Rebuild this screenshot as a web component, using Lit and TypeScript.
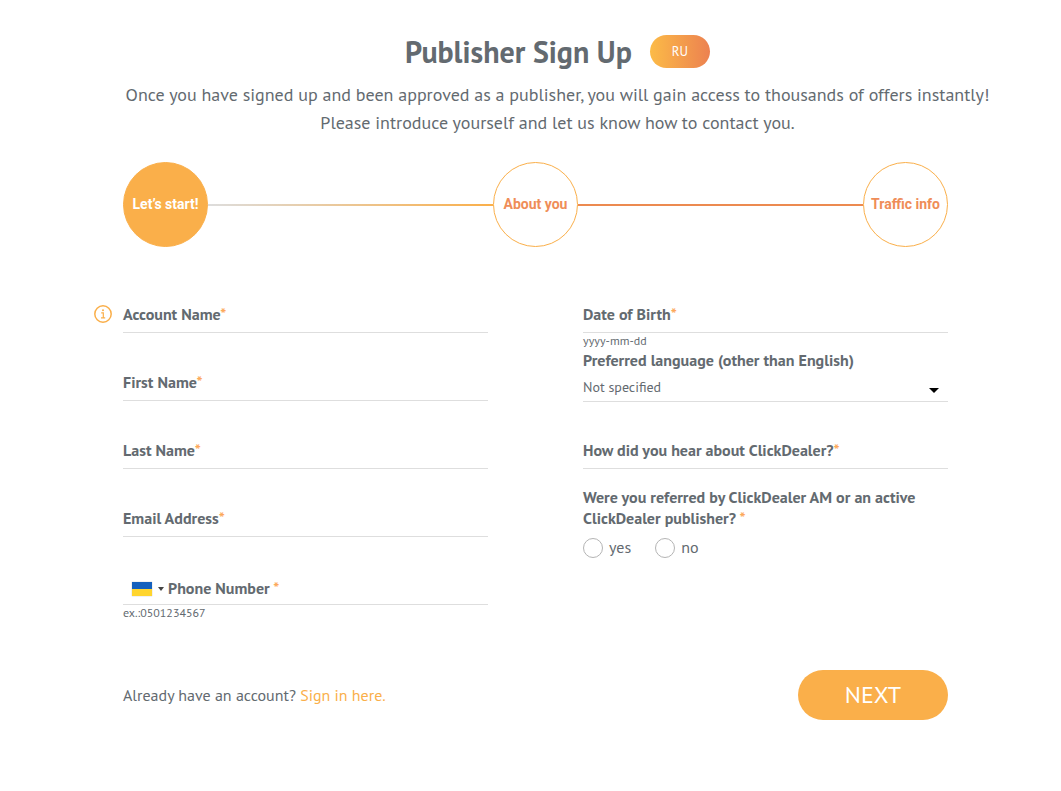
import { LitElement, html, css, svg } from "lit";
import { customElement, state } from "lit/decorators.js";

const infoIcon = svg`
  <circle cx="9" cy="9" r="8.2" fill="none" stroke="#faaf4a" stroke-width="1.5" />
  <circle cx="9" cy="5.2" r="1" fill="#faaf4a" />
  <path d="M7.2 7.9H9.3V12.6M7 12.8H11.2" fill="none" stroke="#faaf4a" stroke-width="1.2" />
`;

@customElement("app-root")
export class AppRoot extends LitElement {
  @state() private referred = "";

  static styles = css`
    :host {
      display: block;
      box-sizing: border-box;
      min-height: 100vh;
      padding: 35px 113px 71px 123px;
      background: #fff;
      color: #636a70;
      font-family: "PT Sans", Lato, "Noto Sans", sans-serif;
      font-size: 16px;
      line-height: 21px;
    }
    * {
      box-sizing: border-box;
    }
    button,
    input,
    select {
      font-family: inherit;
      color: inherit;
      margin: 0;
    }
    .header {
      margin: 0 -60px 0 -16px;
      text-align: center;
    }
    .title-row {
      display: flex;
      justify-content: center;
      align-items: center;
      gap: 18px;
    }
    .title {
      margin: 0;
      font-size: 30px;
      line-height: 33px;
      font-weight: 700;
    }
    .lang {
      width: 60px;
      height: 33px;
      padding: 0;
      border: 0;
      border-radius: 17px;
      background: linear-gradient(90deg, #fcbb47, #ec8150);
      color: #fff;
      font-size: 13px;
    }
    .intro {
      margin: 13px 0 0;
      font-size: 18px;
      line-height: 28px;
    }
    .steps {
      display: flex;
      align-items: center;
      margin: 25px 0 0;
      padding: 0;
      list-style: none;
    }
    .step {
      display: flex;
      flex: none;
      align-items: center;
      justify-content: center;
      width: 85px;
      height: 85px;
      border: 1px solid #faaf4a;
      border-radius: 50%;
      color: #ef8d58;
      font-family: Roboto, sans-serif;
      font-size: 14px;
      font-weight: 700;
      white-space: nowrap;
    }
    .step.active {
      background: #faaf4a;
      color: #fff;
    }
    .line {
      flex: 1;
      height: 2px;
      background: #ec8a50;
    }
    .line.started {
      background: linear-gradient(90deg, #dddddd, #faaf4a);
    }
    .columns {
      display: grid;
      grid-template-columns: 1fr 1fr;
      column-gap: 95px;
      margin-top: 48px;
    }
    .column {
      display: flex;
      flex-direction: column;
    }
    .column.left {
      gap: 30px;
    }
    .field {
      position: relative;
      display: grid;
      align-items: center;
      height: 38px;
      padding-top: 2px;
      border-bottom: 1px solid #dedede;
    }
    .field > label,
    .field > input {
      grid-area: 1 / 1;
    }
    .label {
      font-weight: 700;
    }
    .field > label {
      pointer-events: none;
    }
    .star {
      color: #fca95c;
    }
    .input {
      width: 100%;
      height: 35px;
      padding: 0;
      border: 0;
      outline: 0;
      background: none;
      font-size: 16px;
    }
    .info {
      position: absolute;
      left: -29px;
      top: 10px;
      width: 18px;
      height: 18px;
    }
    .phone {
      grid-template-columns: auto 1fr;
      column-gap: 4px;
      padding: 6px 0 0 9px;
    }
    .field.phone > label,
    .field.phone > input {
      grid-area: 1 / 2;
    }
    .phone .input {
      height: 31px;
    }
    .country {
      display: flex;
      align-items: center;
      gap: 6px;
      padding: 0;
      border: 0;
      background: none;
    }
    .flag {
      width: 20px;
      height: 14px;
      background: linear-gradient(#1460bd 50%, #ffd52e 50%);
      box-shadow: 0 0 1px #aaa;
    }
    .caret {
      border: 3px solid transparent;
      border-top: 4px solid #444;
      border-bottom: 0;
    }
    .hint {
      font-size: 12px;
      line-height: 16px;
    }
    .select-label {
      margin-top: 1px;
    }
    .select-wrap {
      display: grid;
      align-items: center;
      margin: 2px 0 29px;
      border-bottom: 1px solid #dedede;
    }
    .select {
      grid-area: 1 / 1;
      height: 28px;
      padding: 0;
      border: 0;
      outline: 0;
      appearance: none;
      background: none;
      font-size: 14px;
    }
    .arrow {
      grid-area: 1 / 1;
      justify-self: end;
      margin: 7px 9px 0 0;
      border: 5px solid transparent;
      border-top-color: #000;
      border-bottom: 0;
      pointer-events: none;
    }
    .referral {
      margin: 18px 0 0;
      padding: 0;
      border: 0;
    }
    .legend {
      padding: 0;
      font-weight: 700;
    }
    .choices {
      display: flex;
      gap: 24px;
      padding-top: 8px;
    }
    .choice {
      display: flex;
      align-items: center;
      gap: 6px;
    }
    .radio {
      appearance: none;
      width: 20px;
      height: 20px;
      border: 1px solid #b4b4b4;
      border-radius: 50%;
      background: #fff;
    }
    .radio:checked {
      background: radial-gradient(#faaf4a 45%, #fff 50%);
    }
    .footer {
      display: flex;
      align-items: center;
      justify-content: space-between;
      margin-top: 49px;
    }
    .signin {
      color: #faaf4a;
      text-decoration: none;
    }
    .next {
      width: 150px;
      height: 50px;
      padding: 0 0 2px;
      border: 0;
      border-radius: 25px;
      background: #faaf4a;
      color: #fff;
      font-size: 24px;
    }
  `;

  private star() {
    return html`<span class="star">*</span>`;
  }

  private field(id: string, label: string, info = false) {
    return html`
      <div class="field">
        ${info
          ? html`<svg class="info" viewBox="0 0 18 18" aria-hidden="true">${infoIcon}</svg>`
          : ""}
        <input class="input" id=${id} type="text" />
        <label class="label" for=${id}>${label}${this.star()}</label>
      </div>
    `;
  }

  private choice(value: string) {
    return html`
      <label class="choice">
        <input
          class="radio"
          type="radio"
          name="referred"
          value=${value}
          .checked=${this.referred === value}
          @change=${() => (this.referred = value)}
        />
        <span>${value}</span>
      </label>
    `;
  }

  render() {
    return html`
      <header class="header">
        <div class="title-row">
          <h1 class="title">Publisher Sign Up</h1>
          <button class="lang" type="button">RU</button>
        </div>
        <p class="intro">
          Once you have signed up and been approved as a publisher, you will gain access to
          thousands of offers instantly!<br />Please introduce yourself and let us know how to
          contact you.
        </p>
      </header>
      <div class="steps">
        <div class="step active">Let’s start!</div>
        <div class="line started"></div>
        <div class="step">About you</div>
        <div class="line"></div>
        <div class="step">Traffic info</div>
      </div>
      <form @submit=${(e: Event) => e.preventDefault()}>
        <div class="columns">
          <div class="column left">
            ${this.field("account", "Account Name", true)}
            ${this.field("first", "First Name")}
            ${this.field("last", "Last Name")}
            ${this.field("email", "Email Address")}
            <div>
              <div class="field phone">
                <button class="country" type="button" aria-label="Country code">
                  <span class="flag"></span><span class="caret"></span>
                </button>
                <input class="input" id="phone" type="tel" />
                <label class="label" for="phone">Phone Number ${this.star()}</label>
              </div>
              <div class="hint">ex.:0501234567</div>
            </div>
          </div>
          <div class="column">
            ${this.field("birth", "Date of Birth")}
            <div class="hint">yyyy-mm-dd</div>
            <label class="label select-label" for="language"
              >Preferred language (other than English)</label
            >
            <div class="select-wrap">
              <select class="select" id="language">
                <option>Not specified</option>
              </select>
              <span class="arrow"></span>
            </div>
            ${this.field("source", "How did you hear about ClickDealer?")}
            <fieldset class="referral">
              <legend class="legend">
                Were you referred by ClickDealer AM or an active ClickDealer publisher?
                ${this.star()}
              </legend>
              <div class="choices">${this.choice("yes")}${this.choice("no")}</div>
            </fieldset>
          </div>
        </div>
        <div class="footer">
          <span>Already have an account? <a class="signin" href="#">Sign in here.</a></span>
          <button class="next" type="submit">NEXT</button>
        </div>
      </form>
    `;
  }
}
